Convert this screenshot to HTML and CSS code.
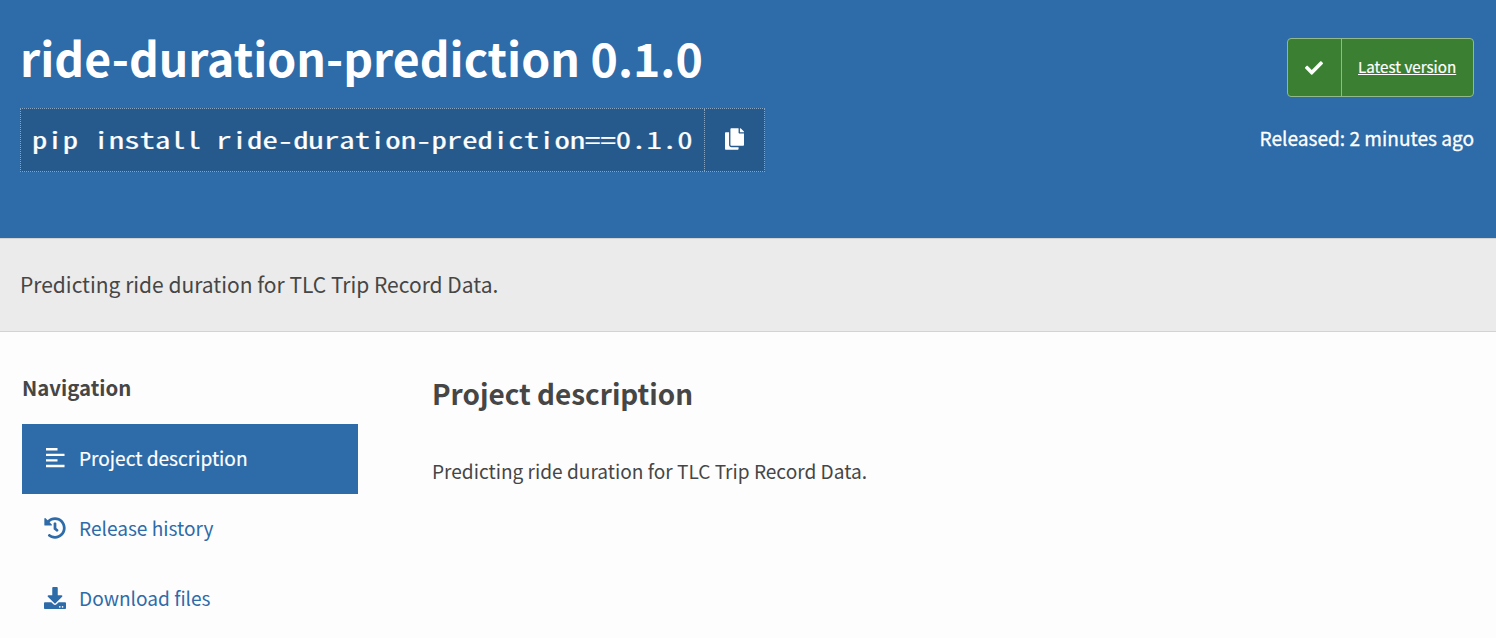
FILE: index.html
```html
<!DOCTYPE html>
<html lang="en">
<head>
<meta charset="utf-8">
<title>ride-duration-prediction 0.1.0</title>
<link rel="stylesheet" href="styles.css">
</head>
<body>
<header class="banner">
  <div class="package">
    <h1 class="package-name">ride-duration-prediction 0.1.0</h1>
    <div class="pip">
      <code class="pip-command"><span class="pip-text">pip install ride-duration-prediction==0.1.0</span></code>
      <button class="pip-copy" type="button" aria-label="Copy">
        <svg class="copy-icon" viewBox="0 0 448 512"><path d="M320 448v40c0 13.255-10.745 24-24 24H24c-13.255 0-24-10.745-24-24V120c0-13.255 10.745-24 24-24h72v296c0 30.879 25.121 56 56 56h168zm0-344V0H152c-13.255 0-24 10.745-24 24v368c0 13.255 10.745 24 24 24h272c13.255 0 24-10.745 24-24V128H344c-13.2 0-24-10.8-24-24zm120.971-31.029L375.029 7.029A24 24 0 0 0 358.059 0H352v96h96v-6.059a24 24 0 0 0-7.029-16.97z"/></svg>
      </button>
    </div>
  </div>
  <div class="release">
    <a class="status">
      <span class="status-check"><svg class="check-icon" viewBox="0 0 512 512"><path d="M173.898 439.404l-166.4-166.4c-9.997-9.997-9.997-26.206 0-36.204l36.203-36.204c9.997-9.998 26.207-9.998 36.204 0L192 312.69 432.095 72.596c9.997-9.997 26.207-9.997 36.204 0l36.203 36.204c9.997 9.997 9.997 26.206 0 36.204l-294.4 294.401c-9.998 9.997-26.207 9.997-36.204-.001z"/></svg></span>
      <span class="status-label">Latest version</span>
    </a>
    <p class="released">Released: 2 minutes ago</p>
  </div>
</header>
<section class="summary"><p class="summary-text">Predicting ride duration for TLC Trip Record Data.</p></section>
<main class="content">
  <nav class="sidebar">
    <h2 class="sidebar-title">Navigation</h2>
    <a class="tab tab-active"><svg class="tab-icon align-icon" viewBox="0 0 20 20"><path d="M1 0H12.500V2.400H1zM1 5.700H19.500V8.100H1zM1 11.200H12.500V13.600H1zM1 16.800H19.500V19.200H1z"/></svg><span class="tab-label">Project description</span></a>
    <a class="tab"><svg class="tab-icon" viewBox="0 0 512 512"><path d="M504 255.531c.253 136.64-111.18 248.372-247.82 248.468-59.015.042-113.223-20.53-155.822-54.911-11.077-8.94-11.905-25.541-1.839-35.607l11.267-11.267c8.609-8.609 22.353-9.551 31.891-1.984C173.062 425.135 212.781 440 256 440c101.705 0 184-82.311 184-184 0-101.705-82.311-184-184-184-48.814 0-93.149 18.969-126.068 49.932l50.754 50.754c10.08 10.08 2.941 27.314-11.313 27.314H24c-8.837 0-16-7.163-16-16V38.627c0-14.254 17.234-21.393 27.314-11.314l49.372 49.372C129.209 34.136 189.552 8 256 8c136.81 0 247.747 110.78 248 247.531zm-180.912 78.784l9.823-12.63c8.138-10.463 6.253-25.542-4.21-33.679L288 256.349V152c0-13.255-10.745-24-24-24h-16c-13.255 0-24 10.745-24 24v135.651l65.409 50.874c10.463 8.137 25.541 6.253 33.679-4.21z"/></svg><span class="tab-label">Release history</span></a>
    <a class="tab"><svg class="tab-icon" viewBox="0 0 512 512"><path d="M216 0h80c13.3 0 24 10.7 24 24v168h87.700c17.800 0 26.700 21.500 14.100 34.100L269.700 378.300c-7.500 7.500-19.800 7.500-27.300 0L90.100 226.100c-12.600-12.600-3.700-34.100 14.100-34.100H192V24c0-13.300 10.700-24 24-24zm296 376v112c0 13.300-10.700 24-24 24H24c-13.300 0-24-10.700-24-24V376c0-13.300 10.700-24 24-24h146.700l49 49c20.100 20.100 52.500 20.100 72.600 0l49-49H488c13.300 0 24 10.700 24 24zm-124 88c0-11-9-20-20-20s-20 9-20 20 9 20 20 20 20-9 20-20zm64 0c0-11-9-20-20-20s-20 9-20 20 9 20 20 20 20-9 20-20z"/></svg><span class="tab-label">Download files</span></a>
  </nav>
  <article class="description">
    <h2 class="description-title">Project description</h2>
    <p class="description-text">Predicting ride duration for TLC Trip Record Data.</p>
  </article>
</main>
</body>
</html>
```

FILE: styles.css
```css
* { box-sizing: border-box; }
body { margin: 0; height: 638px; overflow: hidden; background: #fdfdfd; color: #464646; font-family: "Noto Sans CJK SC", sans-serif; font-size: 19.1px; }
h1, h2, p { margin: 0; white-space: nowrap; }
svg { display: block; fill: currentColor; }
.banner { display: flex; justify-content: space-between; height: 238px; padding: 28px 22px 0 20px; background: #2e6ba9; color: #fff; }
.package-name { height: 80px; line-height: 58px; font-size: 46.4px; font-weight: 700; }
.pip { display: flex; width: 745px; height: 64px; border: 1px dotted #86a5c3; background: #265a8d; }
.pip-command { flex: none; width: 684px; padding-left: 11px; border-right: 1px dotted #86a5c3; line-height: 61px; font-family: "Noto Sans Mono CJK SC", "Liberation Mono", monospace; font-size: 23px; white-space: pre; }
.pip-text { display: inline-block; transform: scaleX(1.336); transform-origin: left; -webkit-text-stroke: 0.2px #fff; }
.pip-copy { display: flex; flex: 1; align-items: center; justify-content: center; padding: 0; border: 0; background: none; color: #fff; }
.copy-icon { width: 19px; height: 22px; margin-top: -2px; margin-left: -1px; }
.release { display: flex; flex-direction: column; align-items: flex-end; padding-top: 10px; }
.status { display: flex; width: 187px; height: 59px; border: 1px solid #91b989; border-radius: 4px; background: #3b8032; }
.status-check { display: flex; width: 54px; align-items: center; justify-content: center; border-right: 1px solid #91b989; }
.check-icon { width: 18px; height: 18px; margin-left: -1px; }
.status-label { flex: 1; padding-left: 16px; line-height: 54px; font-size: 15.2px; -webkit-text-stroke: 0.2px #fff; text-decoration: underline; white-space: nowrap; }
.released { margin-top: 26px; line-height: 30px; -webkit-text-stroke: 0.3px #fff; }
.summary { height: 94px; padding: 30px 20px; border-top: 1px solid #d3d3d3; border-bottom: 1px solid #d3d3d3; background: #ebebeb; }
.summary-text { line-height: 30px; font-size: 21px; }
.content { display: grid; grid-template-columns: 336px 1fr; column-gap: 74px; padding: 40px 22px 0; }
.sidebar-title { height: 52px; line-height: 30px; font-size: 20.4px; }
.tab { display: flex; height: 70px; padding-left: 22px; gap: 13px; align-items: center; color: #2e6ba9; white-space: nowrap; }
.tab-active { background: #2e6ba9; color: #fff; }
.tab-active .tab-label { -webkit-text-stroke: 0.2px #fff; }
.tab-label { padding-bottom: 2px; line-height: 30px; }
.tab-icon { width: 22px; height: 22px; margin-top: -2px; }
.align-icon { padding: 1px; }
.description-title { line-height: 42px; font-size: 27.9px; }
.description-text { margin-top: 42px; line-height: 30px; }
```
